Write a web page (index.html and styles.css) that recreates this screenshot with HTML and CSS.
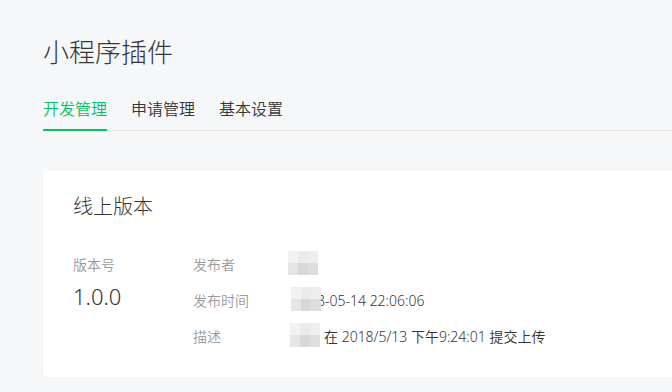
FILE: index.html
```html
<!DOCTYPE html>
<html lang="zh-CN">
<head>
  <meta charset="UTF-8" />
  <meta name="viewport" content="width=device-width, initial-scale=1.0"/>
  <title>小程序插件</title>
  <link rel="stylesheet" href="styles.css">
</head>
<body>
  <div class="page">
    <h1 class="page-title">小程序插件</h1>

    <nav class="tabs">
      <a class="tab active">开发管理</a>
      <a class="tab">申请管理</a>
      <a class="tab">基本设置</a>
    </nav>

    <section class="card">
      <h2 class="card-title">线上版本</h2>
      <div class="version-info">
        <div class="version-col">
          <div class="label">版本号</div>
          <div class="version-num">1.0.0</div>
        </div>
        <div class="detail-list">
          <div class="detail-row">
            <div class="label detail-label">发布者</div>
            <div class="value"><span class="mosaic"></span></div>
          </div>
          <div class="detail-row">
            <div class="label detail-label">发布时间</div>
            <div class="value"><span class="mosaic shift"></span>8-05-14 22:06:06</div>
          </div>
          <div class="detail-row">
            <div class="label detail-label">描述</div>
            <div class="value"><span class="mosaic gap"></span>在 2018/5/13 下午9:24:01 提交上传</div>
          </div>
        </div>
      </div>
    </section>
  </div>
</body>
</html>
```

FILE: styles.css
```css
body {
  margin: 0;
  background: #f6f7f9;
  color: #353535;
  font-family: "Noto Sans", "Noto Sans CJK SC", sans-serif;
}

.page {
  padding: 34px 0 0 43px;
}

.page-title {
  margin: 0;
  font-size: 26px;
  line-height: 36px;
  font-weight: 300;
  color: #353535;
}

.tabs {
  display: flex;
  gap: 24px;
  margin-top: 27px;
  border-bottom: 1px solid #e5e5e5;
}

.tab {
  font-size: 16px;
  line-height: 24px;
  font-weight: 350;
  padding-bottom: 8px;
  margin-bottom: -1px;
  border-bottom: 2px solid transparent;
  color: #353535;
  cursor: pointer;
}

.tab.active {
  color: #07c160;
  border-bottom-color: #07c160;
}

.card {
  margin-top: 40px;
  background: white;
  border-radius: 4px 0 0 4px;
  box-shadow: 0 1px 2px rgba(0,0,0,0.08);
  padding: 22px 30px 30px;
}

.card-title {
  margin: 0;
  font-size: 20px;
  line-height: 28px;
  font-weight: 300;
  color: #353535;
}

.version-info {
  display: flex;
  margin-top: 34px;
}

.version-col {
  width: 120px;
}

.label {
  font-size: 14px;
  line-height: 20px;
  font-weight: 350;
  color: #9a9a9a;
}

.version-num {
  margin-top: 6px;
  font-size: 22px;
  line-height: 30px;
  font-weight: 300;
  color: #353535;
}

.detail-list {
  display: flex;
  flex-direction: column;
  gap: 16px;
}

.detail-row {
  display: flex;
  align-items: center;
  height: 20px;
}

.detail-label {
  width: 95px;
}

.value {
  display: flex;
  align-items: center;
  font-size: 14px;
  line-height: 20px;
  font-weight: 350;
  color: #353535;
}

.mosaic {
  position: relative;
  display: inline-block;
  width: 30px;
  height: 24px;
  margin-top: -4px;
  background:
    linear-gradient(90deg, rgba(255,255,255,0.35) 0 10px, transparent 10px 20px, rgba(255,255,255,0.15) 20px),
    linear-gradient(#ebebeb 0 12px, #d8d8d8 12px);
  filter: blur(0.6px);
}

.mosaic.shift {
  margin-left: 3px;
  margin-right: -4px;
}

.mosaic.gap {
  margin-left: 2px;
  margin-right: 4px;
}
```
